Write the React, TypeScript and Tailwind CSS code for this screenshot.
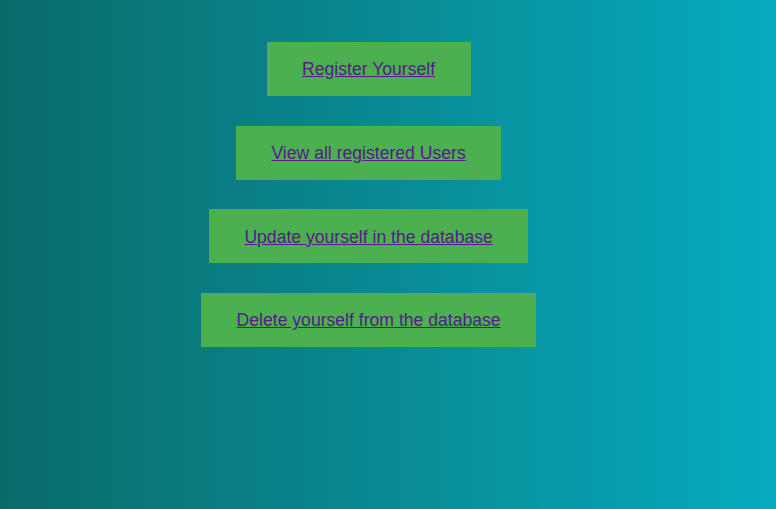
export default function App() {
  const items = [
    "Register Yourself",
    "View all registered Users",
    "Update yourself in the database",
    "Delete yourself from the database",
  ];
  return (
    <div className="w-[776px] h-[509px] bg-gradient-to-r from-[#0a6b6a] to-[#05abc0] font-['Liberation_Sans',Arial,sans-serif]">
      <div className="w-[95%] flex flex-col items-center pt-[42px] gap-[29.7px]">
        {items.map((t) => (
          <a
            key={t}
            href="#"
            className="bg-[#4caf50] h-[54px] px-[35.5px] pt-[1px] flex items-center text-[17.6px] text-[#551a8b] underline"
          >
            {t}
          </a>
        ))}
      </div>
    </div>
  );
}
